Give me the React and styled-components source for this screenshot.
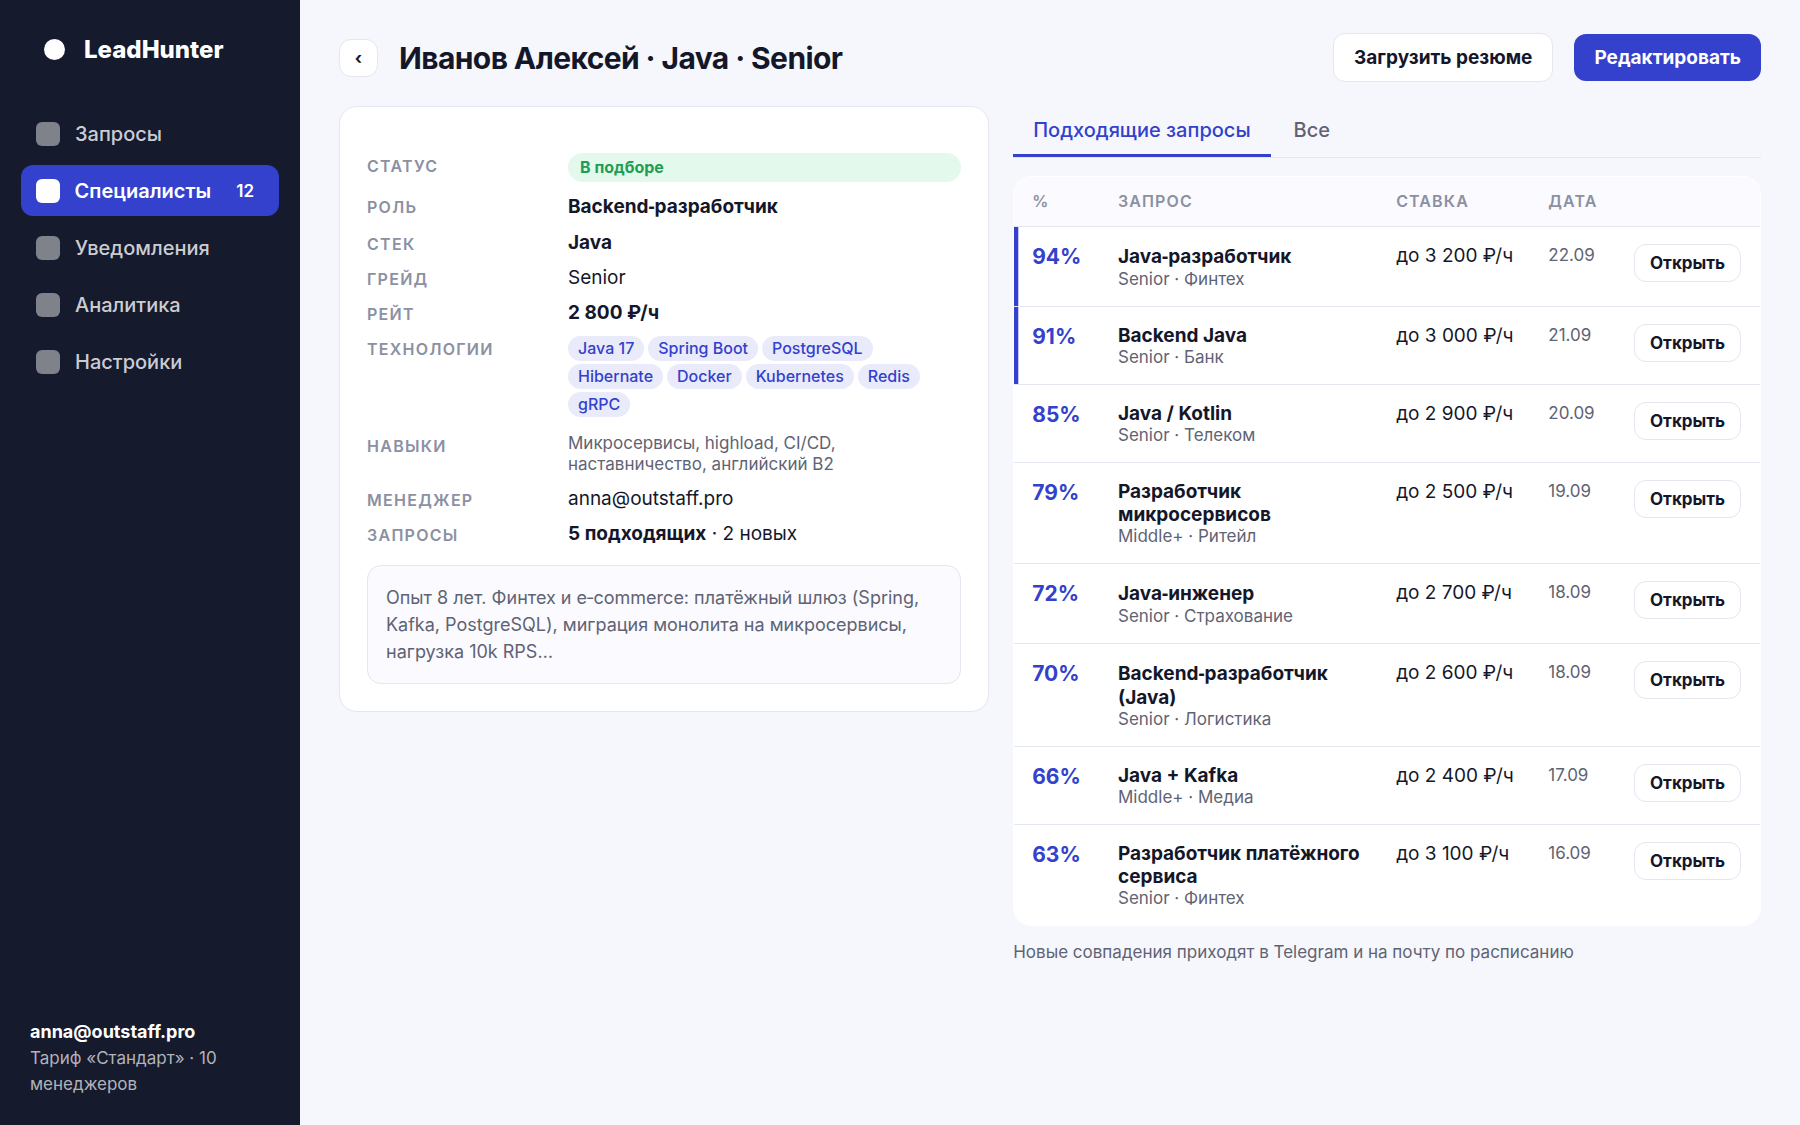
import React from 'react';
import styled, { createGlobalStyle } from 'styled-components';

const GlobalStyle = createGlobalStyle`
    * {
        box-sizing: border-box;
    }

    body {
        margin: 0;
        background: #f6f7fc;
        color: #14172a;
        font-family: Inter, sans-serif;
        font-size: 18px;
    }

    button {
        font-family: inherit;
        cursor: pointer;
    }
`;

const Layout = styled.div`
    display: grid;
    grid-template-columns: 300px 1fr;
    min-height: 100vh;
`;

const Sidebar = styled.aside`
    display: flex;
    flex-direction: column;
    padding: 30px 21px 28px;
    background: #161a2d;
    color: #fff;
`;

const Logo = styled.div`
    display: flex;
    align-items: center;
    gap: 19px;
    height: 39px;
    padding: 0 23px;
    font-size: 24px;
    font-weight: 800;

    .dot {
        width: 21px;
        height: 21px;
        border-radius: 50%;
        background: #fff;
    }
`;

const Nav = styled.nav`
    display: flex;
    flex-direction: column;
    gap: 6px;
    margin-top: 39px;
`;

const NavItem = styled.a`
    display: flex;
    align-items: center;
    gap: 15px;
    height: 51px;
    padding: 0 15px;
    border-radius: 12px;
    background: ${(props) => (props.$active ? '#3341cc' : 'transparent')};
    color: ${(props) => (props.$active ? '#fff' : '#cbccd1')};
    font-size: 20px;
    font-weight: ${(props) => (props.$active ? 600 : 500)};
    text-decoration: none;

    .icon {
        width: 24px;
        height: 24px;
        border-radius: 6px;
        background: ${(props) => (props.$active ? '#fff' : '#7f818b')};
    }

    .count {
        margin-left: auto;
        padding: 0 10px;
        font-size: 17px;
    }
`;

const Account = styled.div`
    margin-top: auto;
    padding: 0 9px;
    color: #b2b3b9;
    font-size: 17px;
    line-height: 26px;

    strong {
        display: block;
        color: #fff;
        font-size: 18px;
    }
`;

const Main = styled.main`
    padding: 33px 39px;
`;

const Header = styled.header`
    display: flex;
    align-items: center;
    gap: 21px;
    margin-bottom: 24px;

    h1 {
        flex: 1;
        margin: 0;
        font-size: 30px;
        font-weight: 700;
        letter-spacing: -0.02em;
    }
`;

const Button = styled.button`
    height: ${(props) => (props.$primary ? 47 : 49)}px;
    padding: 0 20px;
    border: ${(props) => (props.$primary ? 'none' : '1px solid #e4e6f0')};
    border-radius: 12px;
    background: ${(props) => (props.$primary ? '#3341cc' : '#fff')};
    color: ${(props) => (props.$primary ? '#fff' : '#14172a')};
    font-size: 19px;
    font-weight: 700;
`;

const BackButton = styled(Button)`
    width: 39px;
    height: 38px;
    padding: 0;
    font-size: 17px;
`;

const OpenButton = styled(Button)`
    height: 38px;
    padding: 0 15px;
    font-size: 17px;
`;

const Columns = styled.div`
    display: grid;
    grid-template-columns: 1fr 1.15fr;
    align-items: start;
    gap: 24px;
`;

const Card = styled.section`
    padding: 27px;
    border: 1px solid #e4e6f0;
    border-radius: 18px;
    background: #fff;
`;

const Props = styled.dl`
    display: grid;
    grid-template-columns: 180px 1fr;
    gap: 12px 21px;
    margin: 19px 0 20px;
    font-size: 19px;

    dt {
        padding-top: 3px;
        color: #8b90a2;
        font-size: 16px;
        font-weight: 600;
        letter-spacing: 0.08em;
        text-transform: uppercase;
    }

    dd {
        margin: 0;
    }

    b {
        font-weight: 700;
    }
`;

const Status = styled.dd`
    padding: 4px 12px;
    border-radius: 15px;
    background: #e3f9ec;
    color: #1f9d57;
    font-size: 16px;
    font-weight: 700;
    line-height: 21px;
`;

const Chips = styled.dd`
    display: flex;
    flex-wrap: wrap;
    gap: 3px 4px;
    padding-bottom: 4px;
`;

const Chip = styled.span`
    height: 25px;
    padding: 0 10px;
    border-radius: 13px;
    background: #e9ebfb;
    color: #3341cc;
    font-size: 16px;
    font-weight: 500;
    line-height: 25px;
`;

const Skills = styled.dd`
    color: #5f6373;
    font-size: 17px;
    line-height: 21px;
`;

const Hyphen = styled.span`
    font-family: 'Noto Sans', sans-serif;
    line-height: 25px;
`;

const Note = styled.p`
    margin: 0;
    padding: 18px;
    border: 1px solid #e4e6f0;
    border-radius: 14px;
    background: #fafaff;
    color: #5f6373;
    font-size: 18px;
    line-height: 27px;
`;

const Tabs = styled.div`
    display: flex;
    gap: 3px;
    margin-bottom: 18px;
    border-bottom: 1px solid #e4e6f0;
`;

const Tab = styled.button`
    height: 51px;
    padding: 0 20px;
    border: none;
    border-bottom: 3px solid ${(props) => (props.$active ? '#3341cc' : 'transparent')};
    background: none;
    color: ${(props) => (props.$active ? '#3341cc' : '#5f6373')};
    font-size: 20px;
    font-weight: 500;
`;

const TableWrap = styled.div`
    overflow: hidden;
    border: 1px solid #fff;
    border-radius: 18px;
    background: #fff;
`;

const Table = styled.table`
    width: 100%;
    border-collapse: collapse;
    table-layout: fixed;

    th {
        height: 49px;
        padding: 0 18px;
        background: #fafaff;
        color: #8b90a2;
        font-size: 16px;
        font-weight: 600;
        letter-spacing: 0.07em;
        text-align: left;
        text-transform: uppercase;
    }

    td {
        padding: 17px 18px 16px;
        border-top: 1px solid #e4e6f0;
        vertical-align: top;
    }
`;

const Row = styled.tr`
    td:first-child {
        box-shadow: ${(props) => (props.$hot ? 'inset 4px 0 0 #3341cc, inset 5px 0 0 #c4c8f1' : 'none')};
    }

    .match {
        color: #3341cc;
        font-size: 21px;
        font-weight: 700;
    }

    .title {
        font-size: 19px;
        font-weight: 700;
    }

    .meta {
        color: #5f6373;
        font-size: 17px;
        line-height: 21px;
    }

    .rate {
        font-size: 19px;
        white-space: nowrap;
    }

    .date {
        color: #5f6373;
        font-size: 17px;
        line-height: 23px;
    }
`;

const Hint = styled.p`
    margin: 16px 0 0;
    color: #5f6373;
    font-size: 17px;
`;

const navItems = [
    { text: 'Запросы' },
    { text: 'Специалисты', active: true, count: 12 },
    { text: 'Уведомления' },
    { text: 'Аналитика' },
    { text: 'Настройки' },
];

const chips = ['Java 17', 'Spring Boot', 'PostgreSQL', 'Hibernate', 'Docker', 'Kubernetes', 'Redis', 'gRPC'];

const requests = [
    { match: 94, title: 'Java‑разработчик', meta: 'Senior · Финтех', rate: 'до 3 200 ₽/ч', date: '22.09' },
    { match: 91, title: 'Backend Java', meta: 'Senior · Банк', rate: 'до 3 000 ₽/ч', date: '21.09' },
    { match: 85, title: 'Java / Kotlin', meta: 'Senior · Телеком', rate: 'до 2 900 ₽/ч', date: '20.09' },
    { match: 79, title: 'Разработчик микросервисов', meta: 'Middle+ · Ритейл', rate: 'до 2 500 ₽/ч', date: '19.09' },
    { match: 72, title: 'Java‑инженер', meta: 'Senior · Страхование', rate: 'до 2 700 ₽/ч', date: '18.09' },
    { match: 70, title: 'Backend‑разработчик (Java)', meta: 'Senior · Логистика', rate: 'до 2 600 ₽/ч', date: '18.09' },
    { match: 66, title: 'Java + Kafka', meta: 'Middle+ · Медиа', rate: 'до 2 400 ₽/ч', date: '17.09' },
    { match: 63, title: 'Разработчик платёжного сервиса', meta: 'Senior · Финтех', rate: 'до 3 100 ₽/ч', date: '16.09' },
];

const Title = ({ text }) => {
    const [head, tail] = text.split('‑');
    return tail ? <>{head}<Hyphen>‑</Hyphen>{tail}</> : text;
};

const RequestRow = ({ match, title, meta, rate, date }) => (
    <Row $hot={match > 90}>
        <td className="match">{match}%</td>
        <td>
            <div className="title"><Title text={title} /></div>
            <div className="meta">{meta}</div>
        </td>
        <td className="rate">{rate}</td>
        <td className="date">{date}</td>
        <td>
            <OpenButton type="button">Открыть</OpenButton>
        </td>
    </Row>
);

const App = () => {
    return (
        <Layout>
            <GlobalStyle />
            <Sidebar>
                <Logo>
                    <span className="dot" />
                    LeadHunter
                </Logo>
                <Nav>
                    {navItems.map(({ text, active, count }) => (
                        <NavItem key={text} href="#" $active={active}>
                            <span className="icon" />
                            {text}
                            {count && <span className="count">{count}</span>}
                        </NavItem>
                    ))}
                </Nav>
                <Account>
                    <strong>anna@outstaff.pro</strong>
                    Тариф «Стандарт» · 10 менеджеров
                </Account>
            </Sidebar>
            <Main>
                <Header>
                    <BackButton type="button">‹</BackButton>
                    <h1>Иванов Алексей · Java · Senior</h1>
                    <Button type="button">Загрузить резюме</Button>
                    <Button type="button" $primary>Редактировать</Button>
                </Header>
                <Columns>
                    <Card>
                        <Props>
                            <dt>Статус</dt>
                            <Status>В подборе</Status>
                            <dt>Роль</dt>
                            <dd><b><Title text="Backend‑разработчик" /></b></dd>
                            <dt>Стек</dt>
                            <dd><b>Java</b></dd>
                            <dt>Грейд</dt>
                            <dd>Senior</dd>
                            <dt>Рейт</dt>
                            <dd><b>2 800 ₽/ч</b></dd>
                            <dt>Технологии</dt>
                            <Chips>
                                {chips.map((chip) => <Chip key={chip}>{chip}</Chip>)}
                            </Chips>
                            <dt>Навыки</dt>
                            <Skills>Микросервисы, highload, CI/CD, наставничество, английский B2</Skills>
                            <dt>Менеджер</dt>
                            <dd>anna@outstaff.pro</dd>
                            <dt>Запросы</dt>
                            <dd><b>5 подходящих</b> · 2 новых</dd>
                        </Props>
                        <Note>
                            Опыт 8 лет. Финтех и e‑commerce: платёжный шлюз (Spring, Kafka, PostgreSQL),
                            миграция монолита на микросервисы, нагрузка 10k RPS…
                        </Note>
                    </Card>
                    <section>
                        <Tabs>
                            <Tab type="button" $active>Подходящие запросы</Tab>
                            <Tab type="button">Все</Tab>
                        </Tabs>
                        <TableWrap>
                            <Table>
                                <colgroup>
                                    <col width="11.5%" />
                                    <col width="37.3%" />
                                    <col width="20.4%" />
                                    <col width="11.5%" />
                                    <col width="19.3%" />
                                </colgroup>
                                <thead>
                                    <tr>
                                        <th>%</th>
                                        <th>Запрос</th>
                                        <th>Ставка</th>
                                        <th>Дата</th>
                                        <th />
                                    </tr>
                                </thead>
                                <tbody>
                                    {requests.map((item) => <RequestRow key={item.title} {...item} />)}
                                </tbody>
                            </Table>
                        </TableWrap>
                        <Hint>Новые совпадения приходят в Telegram и на почту по расписанию</Hint>
                    </section>
                </Columns>
            </Main>
        </Layout>
    );
};

export default App;
